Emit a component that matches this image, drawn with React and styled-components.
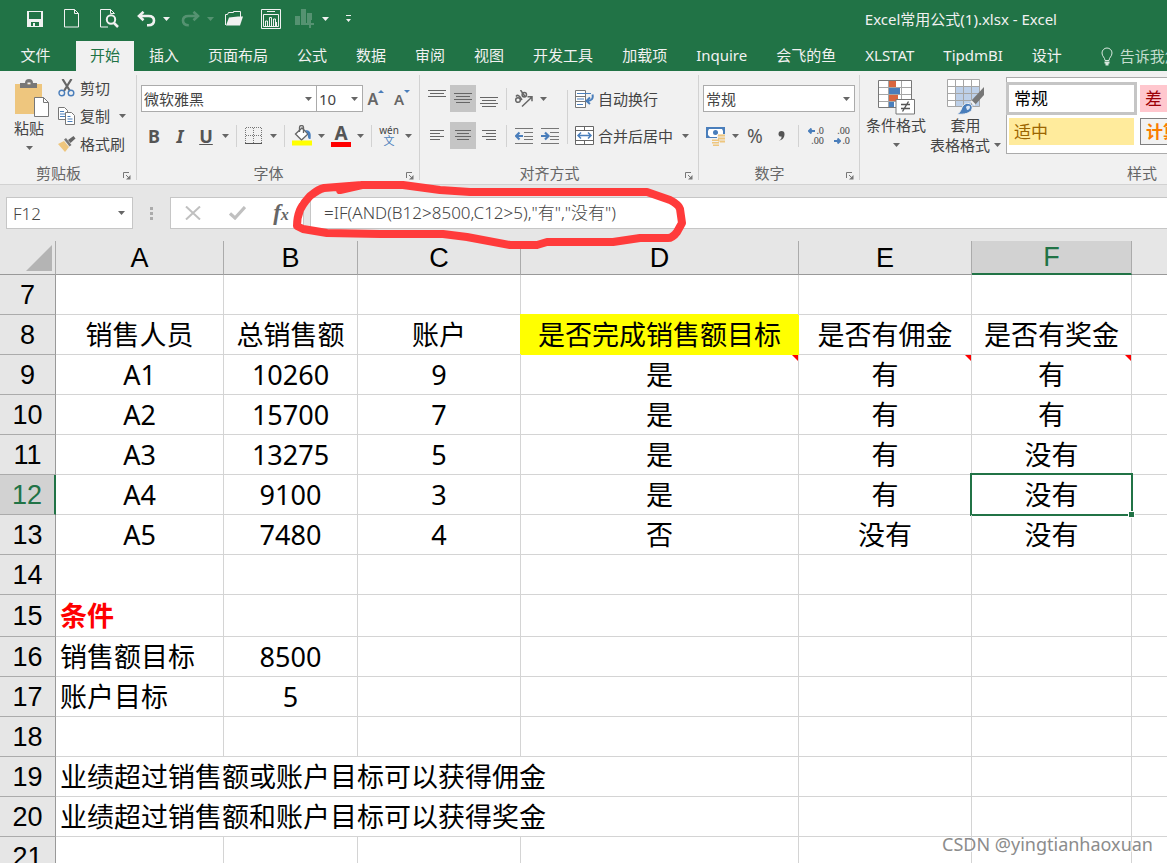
import React from "react";
import styled, { createGlobalStyle, css } from "styled-components";

const GlobalStyle = createGlobalStyle`
  *, *::before, *::after {
    box-sizing: border-box;
  }

  body {
    margin: 0;
    background-color: #ffffff;
    color: #444444;
    font-family: "Noto Sans", "Noto Sans CJK SC", sans-serif;
    font-size: 15px;
    line-height: 20px;
  }

  button, input, select {
    margin: 0;
    padding: 0;
    border: 0;
    border-radius: 0;
    background: none;
    color: inherit;
    font: inherit;
  }

  svg {
    display: block;
    flex: none;
  }
`;

const Window = styled.div`
  position: relative;
  display: flex;
  flex-direction: column;
  height: 100vh;
  overflow: hidden;
`;

/* ---------- title bar ---------- */

const TitleBar = styled.header`
  display: flex;
  flex: none;
  align-items: center;
  height: 41px;
  padding: 0 110px 4px 22px;
  background-color: #217346;
  color: #f1f1f1;
`;

const QuickAccess = styled.div`
  display: flex;
  align-items: center;
  gap: 11px;
`;

const QuickGroup = styled.div`
  display: flex;
  align-items: center;
  gap: ${(props) => props.$gap || 0}px;
`;

const QuickButton = styled.button`
  display: flex;
  align-items: center;
  justify-content: center;
  width: ${(props) => props.$width || 26}px;
  height: 26px;
  opacity: ${(props) => (props.disabled ? 0.25 : 1)};
`;

const FileName = styled.h1`
  margin: 0 0 0 auto;
  font-size: 15px;
  font-weight: 400;
  white-space: nowrap;
`;

/* ---------- tabs ---------- */

const TabBar = styled.nav`
  display: flex;
  flex: none;
  gap: 1px;
  height: 30px;
  overflow: hidden;
  background-color: #217346;
`;

const Tab = styled.button`
  flex: none;
  height: 30px;
  padding: 0 14px 2px;
  color: ${(props) => (props.$active ? "#217346" : "#f1f1f1")};
  background-color: ${(props) => (props.$active ? "#f1f1f1" : "transparent")};
  white-space: nowrap;
`;

const FileTab = styled(Tab)`
  width: 75px;
  padding-right: 18px;
`;

const TellMe = styled.button`
  display: flex;
  flex: none;
  align-items: center;
  gap: 7px;
  padding-left: 24px;
  color: #c5ddcf;
  white-space: nowrap;
`;

/* ---------- ribbon ---------- */

const Ribbon = styled.section`
  display: flex;
  flex: none;
  height: 114px;
  overflow: hidden;
  background-color: #f1f1f1;
  border-bottom: 1px solid #d2d2d2;
`;

const RibbonGroup = styled.div`
  position: relative;
  display: flex;
  flex: none;
  flex-direction: column;
  justify-content: space-between;
  width: ${(props) => props.$width}px;

  &::after {
    content: "";
    position: absolute;
    top: 4px;
    right: 0;
    bottom: 4px;
    width: 1px;
    background-color: #d2d2d2;
  }
`;

const GroupFooter = styled.div`
  display: flex;
  align-items: center;
  height: 23px;
  color: #666666;
`;

const GroupLabel = styled.span`
  flex: 1;
  text-align: center;
`;

const Launcher = styled.button`
  width: 20px;
  height: 20px;
  padding: 7px 0 0 6px;
`;

const GroupBody = styled.div`
  display: flex;
  padding: ${(props) => props.$padding || "14px 4px 0"};
`;

const Stack = styled.div`
  display: flex;
  flex-direction: column;
  gap: ${(props) => (props.$tight ? 0 : 10)}px;
  padding-top: ${(props) => (props.$tight ? 3 : 0)}px;
`;

const ToolRow = styled.div`
  display: flex;
  align-items: center;
  height: 27px;
`;

const ToolButton = styled.button`
  display: flex;
  align-items: center;
  justify-content: center;
  width: 26px;
  height: 27px;
  color: #555555;
  font-size: 18px;
  font-weight: 700;
  background-color: ${(props) => (props.$pressed ? "#c5c5c5" : "transparent")};
`;

const Percent = styled.span`
  font-size: 19px;
  font-weight: 400;
`;

const CaretButton = styled.button`
  display: flex;
  align-items: center;
  justify-content: center;
  width: 13px;
  height: 27px;
`;

const Separator = styled.span`
  width: 1px;
  height: ${(props) => (props.$tall ? 54 : 22)}px;
  margin: ${(props) => (props.$tall ? "5px" : "0")} 4px 0;
  background-color: #d2d2d2;
`;

const TextButton = styled.button`
  display: flex;
  align-items: center;
  gap: 4px;
  height: ${(props) => (props.$tall ? 28 : 27)}px;
  padding-left: ${(props) => (props.$tall ? 0 : 3)}px;
  white-space: nowrap;

  svg:last-child:not(:first-child) {
    margin-left: 5px;
  }
`;

const BigButton = styled.button`
  display: flex;
  flex-direction: column;
  align-items: center;
  width: ${(props) => props.$width}px;
  height: 90px;
  padding-top: 8px;
  white-space: nowrap;
`;

const BigLabel = styled.span`
  display: flex;
  align-items: center;
  justify-content: center;
  gap: 4px;
  height: 20px;
`;

const SelectBox = styled.span`
  display: grid;
  align-items: center;
  width: ${(props) => props.$width}px;
  height: 27px;
  border: 1px solid #ababab;
  background-color: #ffffff;

  & + & {
    border-left: 0;
  }

  select, svg {
    grid-area: 1 / 1;
  }

  svg {
    justify-self: end;
    margin-right: 4px;
    pointer-events: none;
  }
`;

const SelectControl = styled.select`
  appearance: none;
  width: 100%;
  height: 25px;
  padding: 0 14px 0 2px;
  outline: none;
`;

const Gallery = styled.div`
  display: grid;
  grid-template-columns: repeat(3, 125px);
  grid-auto-rows: 27px;
  gap: 6px;
  width: 410px;
  height: 77px;
  margin: 6px 0 0 3px;
  padding: 7px 2px;
  border: 1px solid #ababab;
  background-color: #ffffff;
`;

const StyleCell = styled.button`
  padding: 0 5px;
  color: ${(props) => props.$color};
  background-color: ${(props) => props.$fill};
  border: ${(props) => (props.$line ? `1px solid ${props.$line}` : "0")};
  font-size: 17px;
  font-weight: ${(props) => (props.$bold ? 700 : 400)};
  text-align: left;

  ${(props) =>
    props.$selected &&
    css`
      box-shadow: 0 0 0 3px #c5c5c5;
    `}
`;

/* ---------- formula bar ---------- */

const FormulaBar = styled.div`
  display: flex;
  flex: none;
  height: 56px;
  padding: 12px 0 12px 6px;
  background-color: #e6e6e6;
  font-size: 17px;
`;

const NameBox = styled.div`
  display: flex;
  align-items: center;
  width: 127px;
  border: 1px solid #c6c6c6;
  background-color: #ffffff;
`;

const NameInput = styled.input`
  flex: 1;
  min-width: 0;
  height: 30px;
  padding-left: 6px;
  font-weight: 300;
  outline: none;
`;

const NameCaret = styled(CaretButton)`
  width: 22px;
`;

const Grip = styled.span`
  display: flex;
  align-items: center;
  justify-content: center;
  width: 37px;
`;

const FormulaTools = styled.div`
  display: flex;
  width: 134px;
  border: 1px solid #c6c6c6;
  background-color: #ffffff;
`;

const FormulaTool = styled.button`
  display: flex;
  flex: 1;
  align-items: center;
  justify-content: center;
  color: #666666;
  font-family: "Liberation Serif", serif;
  font-size: 23px;
  font-style: italic;
  font-weight: 700;
`;

const FxSub = styled.span`
  font-size: 16px;
  padding-top: 4px;
`;

const FormulaInput = styled.input`
  flex: 1;
  min-width: 0;
  margin-left: 6px;
  padding-left: 13px;
  border: 1px solid #c6c6c6;
  border-right: 0;
  background-color: #ffffff;
  font-weight: 300;
  outline: none;
`;

/* ---------- sheet ---------- */

const Sheet = styled.table`
  flex: none;
  width: 100%;
  table-layout: fixed;
  border-collapse: separate;
  border-spacing: 0;
  color: #000000;
  font-size: 27px;
  line-height: 32px;

  tr > :last-child {
    border-right: 0;
  }
`;

const Corner = styled.td`
  height: 34px;
  padding: 0 3px 3px 0;
  background-color: #e6e6e6;
  border-right: 1px solid #ababab;
  border-bottom: 1px solid #999999;
  vertical-align: bottom;

  svg {
    margin-left: auto;
  }
`;

const ColumnHead = styled.th`
  height: 34px;
  padding: 0;
  font-family: "Liberation Sans", sans-serif;
  font-weight: 400;
  color: ${(props) => (props.$active ? "#217346" : "#000000")};
  background-color: ${(props) => (props.$active ? "#d2d2d2" : "#e6e6e6")};
  border-right: 1px solid #ababab;
  border-bottom: ${(props) => (props.$active ? "2px solid #217346" : "1px solid #999999")};
`;

const RowHead = styled.th`
  height: ${(props) => props.$height || 40}px;
  padding: 0;
  font-family: "Liberation Sans", sans-serif;
  font-weight: 400;
  color: ${(props) => (props.$active ? "#217346" : "#000000")};
  background-color: ${(props) => (props.$active ? "#d2d2d2" : "#e6e6e6")};
  border-right: ${(props) => (props.$active ? "2px solid #217346" : "1px solid #999999")};
  border-bottom: 1px solid #ababab;
`;

const Cell = styled.td`
  position: relative;
  padding: 0 4px;
  border-right: 1px solid #d4d4d4;
  border-bottom: 1px solid #d4d4d4;
  text-align: ${(props) => (props.$left ? "left" : "center")};
  white-space: nowrap;

  ${(props) =>
    props.$highlight &&
    css`
      background-color: #ffff00;
      border-color: #ffff00;
      box-shadow: -1px -1px 0 #ffff00;
    `}

  ${(props) =>
    props.$alert &&
    css`
      color: #ff0000;
      font-weight: 700;
    `}

  ${(props) =>
    props.$note &&
    css`
      &::before {
        content: "";
        position: absolute;
        top: 0;
        right: 0;
        border-top: 6px solid #ff0000;
        border-left: 6px solid transparent;
      }
    `}

  ${(props) =>
    props.$selected &&
    css`
      &::after {
        content: "";
        position: absolute;
        inset: -2px;
        border: 2px solid #217346;
      }
    `}
`;

const FillHandle = styled.span`
  position: absolute;
  right: -4px;
  bottom: -4px;
  z-index: 1;
  width: 7px;
  height: 7px;
  background-color: #217346;
  border: 1px solid #ffffff;
`;

const Scribble = styled.svg`
  position: absolute;
  top: 178px;
  left: 288px;
  pointer-events: none;
`;

const Watermark = styled.span`
  position: absolute;
  right: 14px;
  bottom: 7px;
  color: #8c8c8c;
  font-size: 18px;
  line-height: 24px;
  text-shadow: 1px 1px 0 #ffffff;
`;

/* ---------- icons ---------- */

const Caret = ({ color = "#666666" }) => (
  <svg width="7" height="4" viewBox="0 0 7 4">
    <path d="M0 0h7L3.500 4z" fill={color} />
  </svg>
);

const SaveIcon = () => (
  <svg width="16" height="16" viewBox="0 0 16 16" fill="#f1f1f1">
    <path fillRule="evenodd" d="M0 0h16v16H0zM2 1v7h12V1zM4 11v4h2v-3h2v3h4v-4z" />
  </svg>
);

const NewIcon = () => (
  <svg width="16" height="19" viewBox="0 0 16 19" fill="none" stroke="#f1f1f1">
    <path d="M.5.5h10l4 4v13.5H.5zM10.500 .5v4h4" />
  </svg>
);

const PreviewIcon = () => (
  <svg width="19" height="19" viewBox="0 0 19 19" fill="none" stroke="#f1f1f1">
    <path d="M8 18H.5V.5h10l4 4M10.500 .5v4h4" />
    <circle cx="11" cy="10.500" r="4.200" strokeWidth="2" />
    <path d="M14 14l4 4" strokeWidth="2.500" />
  </svg>
);

const UndoIcon = () => (
  <svg width="19" height="16" viewBox="0 0 19 16" fill="none" stroke="#f1f1f1" strokeWidth="2.600">
    <path d="M2 5h9.500c3.600 0 5.500 2 5.500 4.600 0 3-2.400 4.700-5.800 4.700H10" />
    <path d="M6.500 .8L2 5l4.500 4.200" />
  </svg>
);

const RedoIcon = () => (
  <svg width="19" height="16" viewBox="0 0 19 16" fill="none" stroke="#f1f1f1" strokeWidth="2.600">
    <path d="M17 5H7.500C3.900 5 2 7 2 9.600c0 3 2.400 4.700 5.800 4.700" />
    <path d="M12.500 .8L17 5l-4.500 4.200" />
  </svg>
);

const OpenIcon = () => (
  <svg width="18" height="15" viewBox="0 0 18 15">
    <path d="M.5 14V3.500h2l1-2h5v-1h7V6" fill="none" stroke="#f1f1f1" />
    <path d="M1 14.500L4 6.500l9-1h5l-3 9z" fill="#f1f1f1" />
  </svg>
);

const ChartFrameIcon = () => (
  <svg width="20" height="20" viewBox="0 0 20 20" fill="none" stroke="#f1f1f1">
    <path d="M.5.5h19v19H.5zM6 2.500h8M2.500 5.500h15v12h-15z" />
    <path d="M4.500 17v-5h2v5M8.500 17V8.500h2V17M12.500 17v-7h2v7M15.500 17v-4" />
  </svg>
);

const ChartPlusIcon = () => (
  <svg width="20" height="20" viewBox="0 0 20 20" fill="#f1f1f1">
    <path d="M0 7h5v9H0zM6 0h5v16H6zM12 4h5v7h-3v3h-2zM14 11h2v3h3v2h-3v3h-2v-3h-3v-2h3z" />
  </svg>
);

const CustomizeIcon = () => (
  <svg width="5" height="8" viewBox="0 0 5 8" fill="#f1f1f1">
    <path d="M0 0h5v1H0zM0 4h5L2.500 7z" />
  </svg>
);

const BulbIcon = () => (
  <svg width="12" height="19" viewBox="0 0 12 19" fill="none" stroke="#d9e9e0">
    <path d="M4 13.500c0-3-3-4-3-7.500a5 5 0 0 1 10 0c0 3.500-3 4.500-3 7.500z" />
    <path d="M3.500 15.500h5M4.500 17.500h3" strokeWidth="2" />
  </svg>
);

const PasteIcon = () => (
  <svg width="42" height="39" viewBox="-6 0 42 39">
    <path d="M1 5h27v30H1z" fill="#eec67e" />
    <path d="M6 4h5a4 4 0 0 1 8 0h4v5H6zM13.500 3.500v2h3v-2z" fill="#777777" fillRule="evenodd" />
    <path d="M20.500 18.500h9l5 5v14h-14z" fill="#ffffff" stroke="#777777" />
    <path d="M29.500 18.500v5h5" fill="none" stroke="#777777" />
  </svg>
);

const CutIcon = () => (
  <svg width="18" height="18" viewBox="0 0 18 18" fill="none">
    <path d="M4.500 0l7.500 12M13.500 0L6 12" stroke="#666666" strokeWidth="2.200" />
    <circle cx="3.800" cy="14" r="2.800" stroke="#4a7ebb" strokeWidth="1.400" />
    <circle cx="13" cy="14" r="2.800" stroke="#4a7ebb" strokeWidth="1.400" />
  </svg>
);

const CopyIcon = () => (
  <svg width="18" height="18" viewBox="0 0 18 18" fill="#ffffff" stroke="#777777">
    <path d="M.5.5h6l3 3v9h-9z" />
    <path d="M2 4.500h4M2 7h5M2 9.500h5" stroke="#4a7ebb" />
    <path d="M7.500 5.500h6l3 3v9h-9z" />
    <path d="M9.500 9.500h3M9.500 12h5M9.500 14.500h5" stroke="#4a7ebb" />
  </svg>
);

const BrushIcon = () => (
  <svg width="18" height="16" viewBox="0 0 18 16">
    <path d="M0 8l6-3 5 6-4 5z" fill="#eec67e" />
    <path d="M6 3.500l2-1.500 5.500 7-2 1.500z" fill="#777777" />
    <path d="M10 4l2.500 3 5-4.500L15.500 0z" fill="#666666" />
  </svg>
);

const LauncherIcon = () => (
  <svg width="8" height="8" viewBox="0 0 8 8">
    <path d="M.5 6V.5H6" fill="none" stroke="#777777" />
    <path d="M3 3l3 3" stroke="#777777" />
    <path d="M7.500 3v4.500H3z" fill="#777777" />
  </svg>
);

const SizeLetter = styled.span`
  font-size: ${(props) => props.$size}px;
  font-weight: 600;
  line-height: 20px;
  padding-top: 4px;
`;

const SizeButton = styled(ToolButton)`
  align-items: flex-start;
  color: #666666;
`;

const GrowMark = ({ down }) => (
  <svg width="6" height="11" viewBox="0 0 6 11">
    <path d={down ? "M0 5h6L3 8z" : "M0 8h6L3 5z"} fill="#4a7ebb" />
  </svg>
);

const BordersIcon = () => (
  <svg width="18" height="18" viewBox="0 0 18 18" fill="none" stroke="#777777" shapeRendering="crispEdges">
    <path d="M.5.5h16v16M.5.5v16M8.500 .5v16M.5 8.500h16" strokeDasharray="1 1" />
    <path d="M0 16.500h17" stroke="#555555" />
  </svg>
);

const FillIcon = () => (
  <svg width="20" height="21" viewBox="0 0 20 21">
    <path d="M3.500 9L10 3l6 6-6.500 6z" fill="#ffffff" stroke="#666666" strokeWidth="1.300" />
    <path d="M7.500 7V2.500a2 2 0 0 1 4 0V8" fill="none" stroke="#666666" strokeWidth="1.300" />
    <path d="M13 5c5 0 6.500 3 5.500 9-2 .5-3-1-2.500-5z" fill="#4a7ebb" />
    <path d="M0 15.500h20v5H0z" fill="#ffff00" />
  </svg>
);

const ColorLetter = styled.span`
  width: 20px;
  height: 22px;
  color: #555555;
  border-bottom: 5px solid #ff0000;
  font-size: 19px;
  line-height: 17px;
  text-align: center;
`;

const Phonetic = styled.span`
  display: flex;
  flex-direction: column;
  align-items: center;
  color: #444444;
  font-size: 10px;
  font-weight: 400;
  line-height: 10px;

  b {
    color: #4a7ebb;
    font-size: 11px;
    font-weight: 400;
    line-height: 12px;
  }
`;

// widths of the text lines, top to bottom
const LinesIcon = ({ lines, align = "center", y = 0 }) => (
  <svg width="18" height="19" viewBox="0 0 18 19" fill="#666666">
    {lines.map((w, i) => {
      const x = align === "left" ? 2 : align === "right" ? 16 - w : (18 - w) / 2;
      return <rect key={i} x={x} y={y + i * 3} width={w} height="1" />;
    })}
  </svg>
);

const IndentIcon = ({ right }) => (
  <svg width="18" height="16" viewBox="0 0 18 16" fill="none" stroke="#777777">
    <path d="M0 .5h18M9 4.500h9M9 8.500h9M9 11.500h9M0 15.500h18" />
    {right ? (
      <path d="M0 8h7M4 4.500L7.500 8 4 11.500" stroke="#4a7ebb" strokeWidth="2.200" />
    ) : (
      <path d="M8 8H1M4.500 4.500L1 8l3.500 3.500" stroke="#4a7ebb" strokeWidth="2.200" />
    )}
  </svg>
);

const OrientIcon = () => (
  <svg width="20" height="18" viewBox="0 0 20 18" fill="none" stroke="#666666" strokeWidth="1.500">
    <circle cx="4" cy="10" r="2.300" />
    <path d="M2 6.500c1.500-2 3-1 4 .5l2 3" />
    <path d="M6.500 0l4.500 6.500" />
    <circle cx="10.300" cy="4.800" r="2.200" />
    <path d="M8 16.500L18 7M13.500 6.800H18v4.500" />
  </svg>
);

const WrapIcon = () => (
  <svg width="19" height="18" viewBox="0 0 19 18" fill="none">
    <path d="M.5.5h10v17H.5zM.5 6.500h10M.5 11.500h10" fill="#ffffff" stroke="#777777" />
    <path d="M2 3.500h14M2 9h7M2 14.500h6" stroke="#4a7ebb" />
    <path d="M17.500 4.500c1 4-1 6.500-5 6.500M15 7.500L11.500 11l3.500 3" stroke="#4a7ebb" strokeWidth="2" />
  </svg>
);

const MergeIcon = () => (
  <svg width="19" height="19" viewBox="0 0 19 19" fill="none">
    <path d="M.5.5h18v18H.5zM.5 4.500h18M.5 14.500h18M9.500 .5v4M9.500 14.500v4" fill="#ffffff" stroke="#666666" />
    <path d="M3 9.500h13M6 6.500l-3 3 3 3M13 6.500l3 3-3 3" stroke="#4a7ebb" strokeWidth="1.500" />
  </svg>
);

const MoneyIcon = () => (
  <svg width="20" height="20" viewBox="0 0 20 20">
    <path d="M0 1h19v11H0z" fill="#4a7ebb" />
    <path d="M3 3h13l1 2v4h-2l-1 2H4L2 9V5z" fill="#ffffff" />
    <circle cx="9.500" cy="6.500" r="2.500" fill="#4a7ebb" />
    <path d="M11 8h8v9h-5v3H6v-8h5z" fill="#f1f1f1" />
    <path d="M12 8.500h7v2h-7zM12 11.500h7v2h-7zM12 14.500h7v2h-5v-1h-2zM6 13.500h7v1.500H6zM6 16h7v1.500H6zM7 18.500h6V20H7z" fill="#eec67e" />
  </svg>
);

const CommaIcon = () => (
  <svg width="7" height="10" viewBox="0 0 7 10">
    <path d="M1 9.500C3 8.500 3.800 7 3.500 5.500 1.500 6 .5 4.600.5 3a2.800 2.800 0 0 1 6 0c0 3.500-2 6-5.500 6.500z" fill="#555555" />
  </svg>
);

const Decimals = styled.span`
  display: grid;
  justify-items: end;
  width: 16px;
  font-size: 9px;
  font-weight: 500;
  line-height: 10px;
  color: #555555;

  span {
    display: flex;
    align-items: center;
    gap: 1px;
  }
`;

const SmallArrow = ({ right }) => (
  <svg width="7" height="6" viewBox="0 0 7 6" fill="none" stroke="#4a7ebb" strokeWidth="2">
    {right ? <path d="M0 3h6M3.500 .5L6 3 3.500 5.500" /> : <path d="M7 3H1M3.500 .5L1 3l2.500 2.500" />}
  </svg>
);

const ConditionalIcon = () => (
  <svg width="38" height="36" viewBox="0 0 38 36">
    <path d="M1.500 1.500h33v27h-33z" fill="#ffffff" />
    <path d="M12 2h7v6h-7zM12 16h9v6h-9z" fill="#d9663f" />
    <path d="M12 9h11v6H12zM12 23h5v5h-5z" fill="#4a7ebb" />
    <path d="M1.500 8.500h33M1.500 15.500h33M1.500 22.500h33M11.500 1.500v27M24.500 1.500v27" fill="none" stroke="#a6a6a6" />
    <path d="M1.500 1.500h33v27h-33z" fill="none" stroke="#777777" />
    <path d="M19 20.500h18.500v14.500H19z" fill="#ffffff" stroke="#777777" />
    <path d="M24 25.500h9M24 29.500h9M31.500 22.500l-6 10" stroke="#555555" strokeWidth="1.400" />
  </svg>
);

const TableStyleIcon = () => (
  <svg width="38" height="36" viewBox="0 0 38 36">
    <path d="M.5.5h32v27H.5z" fill="#ffffff" />
    <path d="M9 7h24v21H9z" fill="#bdd0e9" />
    <path d="M.5.5h32v27H.5zM.5 7.500h32M.5 14.500h32M.5 21.500h32M8.500 .5v27M16.500 .5v27M24.500 .5v27" fill="none" stroke="#a6a6a6" />
    <path d="M37 8v8L28 26l-4-4z" fill="#777777" />
    <path d="M24 22l4 4" stroke="#f1f1f1" strokeWidth="2" />
    <path d="M10 35c5-2 4-8 8-10 4-2 8 1 7 5-1 4-8 6-15 5z" fill="#4a7ebb" stroke="#f1f1f1" />
    <path d="M19 28c2-2 4-1 4 0s-1 3-3 3z" fill="#dce7f5" />
  </svg>
);

const CancelIcon = () => (
  <svg width="16" height="14" viewBox="0 0 16 14" stroke="#c0c0c0" strokeWidth="2">
    <path d="M1 .5l14 13M15 .5L1 13.500" />
  </svg>
);

const CheckIcon = () => (
  <svg width="17" height="14" viewBox="0 0 17 14" fill="none" stroke="#c0c0c0" strokeWidth="3.200">
    <path d="M1 7.500L6 12 16 1" />
  </svg>
);

const GripIcon = () => (
  <svg width="3" height="13" viewBox="0 0 3 13" fill="#ababab">
    <path d="M0 0h3v3H0zM0 5h3v3H0zM0 10h3v3H0z" />
  </svg>
);

/* ---------- data ---------- */

const tabs = [
  "开始", "插入", "页面布局", "公式", "数据", "审阅", "视图", "开发工具",
  "加载项", "Inquire", "会飞的鱼", "XLSTAT", "TipdmBI", "设计",
];

const columns = [
  { name: "A", width: 168 },
  { name: "B", width: 134 },
  { name: "C", width: 163 },
  { name: "D", width: 278 },
  { name: "E", width: 173 },
  { name: "F", width: 160 },
  { name: "" },
];

const rows = [
  { n: 7, cells: [] },
  { n: 8, cells: ["销售人员", "总销售额", "账户", "是否完成销售额目标", "是否有佣金", "是否有奖金"] },
  { n: 9, cells: ["A1", "10260", "9", "是", "有", "有"] },
  { n: 10, cells: ["A2", "15700", "7", "是", "有", "有"] },
  { n: 11, cells: ["A3", "13275", "5", "是", "有", "没有"] },
  { n: 12, cells: ["A4", "9100", "3", "是", "有", "没有"] },
  { n: 13, cells: ["A5", "7480", "4", "否", "没有", "没有"] },
  { n: 14, cells: [] },
  { n: 15, height: 42, cells: ["条件"] },
  { n: 16, cells: ["销售额目标", "8500"] },
  { n: 17, cells: ["账户目标", "5"] },
  { n: 18, cells: [] },
  { n: 19, note: "业绩超过销售额或账户目标可以获得佣金", cells: [] },
  { n: 20, note: "业绩超过销售额和账户目标可以获得奖金", cells: [] },
  { n: 21, cells: [] },
];

const Field = ({ label, value, width }) => (
  <SelectBox $width={width}>
    <SelectControl aria-label={label} defaultValue={value}>
      <option>{value}</option>
    </SelectControl>
    <Caret />
  </SelectBox>
);

const Drop = ({ label }) => (
  <CaretButton aria-label={label}>
    <Caret />
  </CaretButton>
);

const Group = ({ label, width, padding, children }) => (
  <RibbonGroup $width={width}>
    <GroupBody $padding={padding}>{children}</GroupBody>
    <GroupFooter>
      <GroupLabel>{label}</GroupLabel>
      <Launcher aria-label={`${label}设置`}>
        <LauncherIcon />
      </Launcher>
    </GroupFooter>
  </RibbonGroup>
);

const SheetRow = ({ row }) => {
  const start = row.note ? 4 : 0;
  return (
    <tr>
      <RowHead scope="row" $height={row.height} $active={row.n === 12}>
        {row.n}
      </RowHead>
      {row.note && (
        <Cell colSpan={4} $left>
          {row.note}
        </Cell>
      )}
      {columns.slice(start).map((column, i) => {
        const selected = row.n === 12 && column.name === "F";
        return (
          <Cell
            key={column.name}
            $left={row.n > 14 && column.name === "A"}
            $alert={row.n === 15}
            $highlight={row.n === 8 && column.name === "D"}
            $note={row.n === 9 && ["D", "E", "F"].includes(column.name)}
            $selected={selected}
          >
            {row.cells[i + start]}
            {selected && <FillHandle />}
          </Cell>
        );
      })}
    </tr>
  );
};

const App = () => {
  return (
    <Window>
      <GlobalStyle />
      <TitleBar>
        <QuickAccess>
          <QuickButton aria-label="保存"><SaveIcon /></QuickButton>
          <QuickButton aria-label="新建"><NewIcon /></QuickButton>
          <QuickButton aria-label="打印预览"><PreviewIcon /></QuickButton>
          <QuickGroup $gap={4}>
            <QuickGroup>
              <QuickButton aria-label="撤消"><UndoIcon /></QuickButton>
              <QuickButton $width={14} aria-label="撤消列表"><Caret color="#f1f1f1" /></QuickButton>
            </QuickGroup>
            <QuickGroup>
              <QuickButton disabled aria-label="恢复"><RedoIcon /></QuickButton>
              <QuickButton disabled $width={14} aria-label="恢复列表"><Caret color="#f1f1f1" /></QuickButton>
            </QuickGroup>
            <QuickButton aria-label="打开"><OpenIcon /></QuickButton>
          </QuickGroup>
          <QuickGroup $gap={8}>
            <QuickButton aria-label="图表"><ChartFrameIcon /></QuickButton>
            <QuickGroup>
              <QuickButton disabled aria-label="添加图表"><ChartPlusIcon /></QuickButton>
              <QuickButton $width={14} aria-label="图表列表"><Caret color="#f1f1f1" /></QuickButton>
            </QuickGroup>
          </QuickGroup>
          <QuickButton $width={10} aria-label="自定义快速访问工具栏"><CustomizeIcon /></QuickButton>
        </QuickAccess>
        <FileName>Excel常用公式(1).xlsx - Excel</FileName>
      </TitleBar>

      <TabBar>
        <FileTab>文件</FileTab>
        {tabs.map((tab) => (
          <Tab key={tab} $active={tab === "开始"}>{tab}</Tab>
        ))}
        <TellMe><BulbIcon />告诉我您想要做什么</TellMe>
      </TabBar>

      <Ribbon>
        <Group label="剪贴板" width={137} padding="0">
          <BigButton $width={58}>
            <PasteIcon />
            <BigLabel>粘贴</BigLabel>
            <BigLabel><Caret /></BigLabel>
          </BigButton>
          <Stack $tight>
            <TextButton $tall><CutIcon />剪切</TextButton>
            <TextButton $tall><CopyIcon />复制<Caret /></TextButton>
            <TextButton $tall><BrushIcon />格式刷</TextButton>
          </Stack>
        </Group>

        <Group label="字体" width={283}>
          <Stack>
            <ToolRow>
              <Field label="字体" value="微软雅黑" width={176} />
              <Field label="字号" value="10" width={46} />
              <SizeButton aria-label="增大字号"><SizeLetter $size={16}>A</SizeLetter><GrowMark /></SizeButton>
              <SizeButton aria-label="减小字号"><SizeLetter $size={15}>A</SizeLetter><GrowMark down /></SizeButton>
            </ToolRow>
            <ToolRow>
              <ToolButton>B</ToolButton>
              <ToolButton><i>I</i></ToolButton>
              <ToolButton><u>U</u></ToolButton>
              <Drop label="下划线样式" />
              <Separator />
              <ToolButton aria-label="边框"><BordersIcon /></ToolButton>
              <Drop label="边框列表" />
              <Separator />
              <ToolButton aria-label="填充颜色"><FillIcon /></ToolButton>
              <Drop label="填充颜色列表" />
              <ToolButton aria-label="字体颜色"><ColorLetter>A</ColorLetter></ToolButton>
              <Drop label="字体颜色列表" />
              <Separator />
              <ToolButton><Phonetic>wén<b>文</b></Phonetic></ToolButton>
              <Drop label="拼音列表" />
            </ToolRow>
          </Stack>
        </Group>

        <Group label="对齐方式" width={279}>
          <Stack>
            <ToolRow>
              <ToolButton aria-label="顶端对齐"><LinesIcon lines={[18, 14, 18]} y={1} /></ToolButton>
              <ToolButton $pressed aria-label="垂直居中"><LinesIcon lines={[18, 14, 18, 14]} y={4} /></ToolButton>
              <ToolButton aria-label="底端对齐"><LinesIcon lines={[18, 14, 18, 14]} y={8} /></ToolButton>
              <Separator />
              <ToolButton aria-label="方向"><OrientIcon /></ToolButton>
              <Drop label="方向列表" />
            </ToolRow>
            <ToolRow>
              <ToolButton aria-label="左对齐"><LinesIcon lines={[14, 10, 14, 10]} align="left" y={4} /></ToolButton>
              <ToolButton $pressed aria-label="居中"><LinesIcon lines={[16, 12, 16, 12]} y={4} /></ToolButton>
              <ToolButton aria-label="右对齐"><LinesIcon lines={[14, 10, 14, 10]} align="right" y={4} /></ToolButton>
              <Separator />
              <ToolButton aria-label="减少缩进量"><IndentIcon /></ToolButton>
              <ToolButton aria-label="增加缩进量"><IndentIcon right /></ToolButton>
            </ToolRow>
          </Stack>
          <Separator $tall />
          <Stack>
            <TextButton><WrapIcon />自动换行</TextButton>
            <TextButton><MergeIcon />合并后居中<Caret /></TextButton>
          </Stack>
        </Group>

        <Group label="数字" width={161}>
          <Stack>
            <Field label="数字格式" value="常规" width={152} />
            <ToolRow>
              <ToolButton aria-label="会计数字格式"><MoneyIcon /></ToolButton>
              <Drop label="会计数字格式列表" />
              <ToolButton><Percent>%</Percent></ToolButton>
              <ToolButton aria-label="千位分隔样式"><CommaIcon /></ToolButton>
              <Separator />
              <ToolButton><Decimals><span><SmallArrow />.0</span><span>.00</span></Decimals></ToolButton>
              <ToolButton><Decimals><span>.00</span><span><SmallArrow right />.0</span></Decimals></ToolButton>
            </ToolRow>
          </Stack>
        </Group>

        <Group label="样式" width={584} padding="0 4px">
          <BigButton $width={64}>
            <ConditionalIcon />
            <BigLabel>条件格式</BigLabel>
            <BigLabel><Caret /></BigLabel>
          </BigButton>
          <BigButton $width={75}>
            <TableStyleIcon />
            <BigLabel>套用</BigLabel>
            <BigLabel>表格格式<Caret /></BigLabel>
          </BigButton>
          <Gallery>
            <StyleCell $selected $color="#000000" $fill="#ffffff">常规</StyleCell>
            <StyleCell $color="#9c0006" $fill="#ffc7ce">差</StyleCell>
            <StyleCell $color="#006100" $fill="#c6efce">好</StyleCell>
            <StyleCell $color="#9c6500" $fill="#ffeb9c">适中</StyleCell>
            <StyleCell $bold $color="#fa7d00" $fill="#f2f2f2" $line="#7f7f7f">计算</StyleCell>
            <StyleCell $bold $color="#ffffff" $fill="#a5a5a5">检查单元格</StyleCell>
          </Gallery>
        </Group>
      </Ribbon>

      <FormulaBar>
        <NameBox>
          <NameInput aria-label="名称框" defaultValue="F12" />
          <NameCaret aria-label="名称列表"><Caret /></NameCaret>
        </NameBox>
        <Grip><GripIcon /></Grip>
        <FormulaTools>
          <FormulaTool aria-label="取消"><CancelIcon /></FormulaTool>
          <FormulaTool aria-label="输入"><CheckIcon /></FormulaTool>
          <FormulaTool>f<FxSub>x</FxSub></FormulaTool>
        </FormulaTools>
        <FormulaInput aria-label="编辑栏" defaultValue={'=IF(AND(B12>8500,C12>5),"有","没有")'} />
      </FormulaBar>

      <Sheet>
        <colgroup>
          <col width="56" />
          {columns.map((column) => (
            <col key={column.name} width={column.width} />
          ))}
        </colgroup>
        <thead>
          <tr>
            <Corner>
              <svg width="26" height="26" viewBox="0 0 26 26">
                <path d="M26 0v26H0z" fill="#b4b4b4" />
              </svg>
            </Corner>
            {columns.map((column) => (
              <ColumnHead key={column.name} scope="col" $active={column.name === "F"}>
                {column.name}
              </ColumnHead>
            ))}
          </tr>
        </thead>
        <tbody>
          {rows.map((row) => (
            <SheetRow key={row.n} row={row} />
          ))}
        </tbody>
      </Sheet>

      <Scribble width="404" height="76" viewBox="288 178 404 76" fill="none" stroke="#ff3b3b" strokeWidth="8" strokeLinecap="round" strokeLinejoin="round">
        <path d="M340 190l22-5h41l37 5 30 2h177l23 8c6 3 9 6 10 9l2 14-5 9c-3 4-5 6-9 6h-28l-27 4h-66l-10 3h-27l-43-8-24-3h-63l-53-1-24-4-6-3c0-6 1-11 3-16 3-6 6-10 10-14 5-4 9-7 14-8l38-3" />
      </Scribble>
      <Watermark>CSDN @yingtianhaoxuan</Watermark>
    </Window>
  );
};

export default App;
